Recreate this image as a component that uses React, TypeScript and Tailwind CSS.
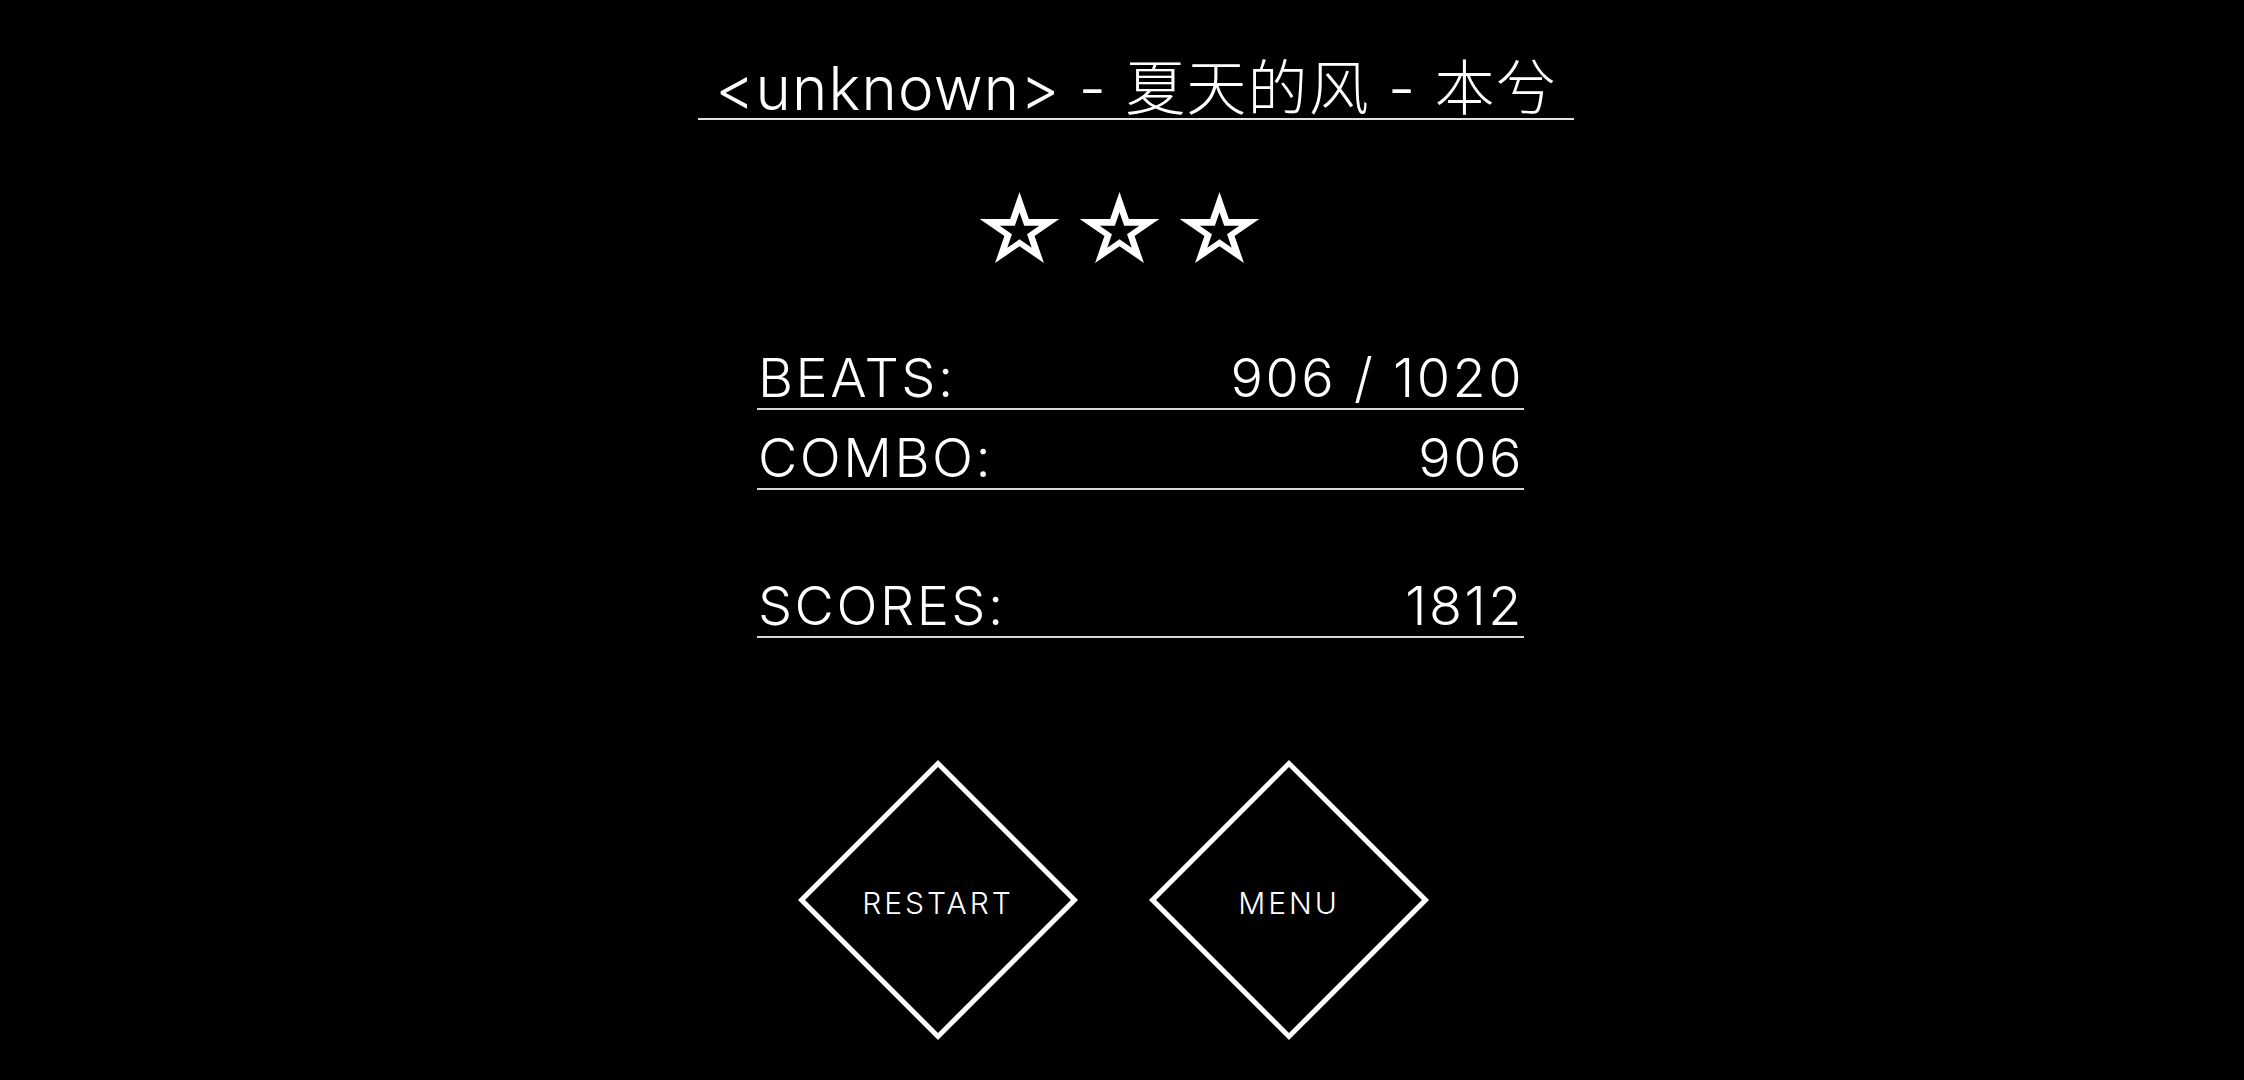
import React from "react";

function starPath(cx: number, cy: number, R: number, sx: number, k: number) {
  const pts: string[] = [];
  for (let i = 0; i < 10; i++) {
    const ang = ((-90 + 36 * i) * Math.PI) / 180;
    const rad = (i % 2 === 0 ? R : R * 0.382) * k;
    const x = cx + sx * rad * Math.cos(ang);
    const y = cy + rad * Math.sin(ang);
    pts.push(`${x.toFixed(2)} ${y.toFixed(2)}`);
  }
  return "M" + pts.join(" L") + " Z";
}

function Star() {
  const cx = 39.5;
  const cy = 39.25;
  const R = 39.25;
  const sx = 1.059;
  const d = starPath(cx, cy, R, sx, 1) + " " + starPath(cx, cy + 0.6, R, sx, 0.5);
  return (
    <svg width="79" height="71" viewBox="0 0 79 71">
      <path d={d} fill="#ffffff" fillRule="evenodd" />
    </svg>
  );
}

function StatRow({ label, value, className }: { label: string; value: string; className?: string }) {
  return (
    <div
      className={
        "w-[767px] flex justify-between items-end border-b-2 border-[#d8d8d8] text-[54px] leading-[61px] font-light tracking-[2.5px] text-white " +
        (className ?? "")
      }
    >
      <span className="pl-[1px]">{label}</span>
      <span>{value}</span>
    </div>
  );
}

function Diamond({ label }: { label: string }) {
  return (
    <div className="relative w-[280px] h-[280px] flex items-center justify-center">
      <div className="absolute left-[41px] top-[41px] w-[198px] h-[198px] rotate-45 border-[5px] border-white" />
      <span className="relative pt-[6px] text-[30px] leading-none font-light tracking-[3px] text-white">
        {label}
      </span>
    </div>
  );
}

export default function App() {
  return (
    <div className="w-full h-[1080px] bg-black overflow-hidden text-white font-['Inter','Noto_Sans_CJK_SC',sans-serif]">
      <div className="flex flex-col items-center pt-[59px]">
        <div className="pl-[28px]">
          <div className="px-[17px] border-b-2 border-[#e0e0e0] text-[60px] leading-[59px] font-light tracking-[1.2px] whitespace-nowrap">
            &lt;unknown&gt; - 夏天的风 - 本兮
          </div>
        </div>

        <div className="pr-[5px] mt-[72px] flex gap-[21px]">
          <Star />
          <Star />
          <Star />
        </div>

        <div className="pl-[37px] mt-[84px] flex flex-col">
          <StatRow label="BEATS:" value="906 / 1020" />
          <StatRow label="COMBO:" value="906" className="mt-[17px]" />
          <StatRow label="SCORES:" value="1812" className="mt-[85px]" />
        </div>

        <div className="pr-[17px] mt-[122px] flex gap-[71px]">
          <Diamond label="RESTART" />
          <Diamond label="MENU" />
        </div>
      </div>
    </div>
  );
}
